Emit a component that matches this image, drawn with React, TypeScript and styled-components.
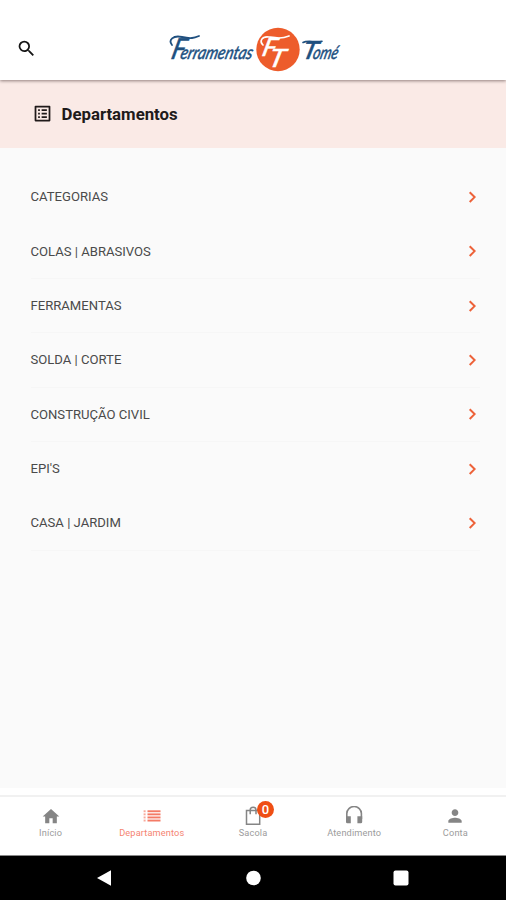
import React from "react";
import styled, { createGlobalStyle } from "styled-components";
import { MdSearch, MdOutlineListAlt, MdHome, MdPerson } from "react-icons/md";

const GlobalStyle = createGlobalStyle`
  * { box-sizing: border-box; }
  body { margin: 0; background: #fafafa; font-family: Roboto, sans-serif; }
`;

const Screen = styled.div`
  display: flex;
  flex-direction: column;
  width: 506px;
  height: 900px;
  overflow: hidden;
  background: #fafafa;
`;

const Header = styled.header`
  position: relative;
  z-index: 1;
  display: flex;
  align-items: flex-start;
  flex: 0 0 80px;
  padding: 22px 0 0 16px;
  background: #fff;
  box-shadow: 0 1px 3px rgba(60, 40, 40, 0.55);
`;

const SearchButton = styled.button`
  display: flex;
  margin: 16px 0 0;
  padding: 0;
  border: 0;
  background: none;
  color: #151515;
`;

const Logo = styled.svg`
  width: 190px;
  height: 56px;
  margin-left: 127px;
  overflow: visible;
`;

const LogoText = styled.text`
  font-family: Lato, sans-serif;
  font-style: italic;
  font-weight: 400;
`;

const TitleBar = styled.div`
  display: flex;
  align-items: center;
  flex: 0 0 68px;
  gap: 8.5px;
  padding: 0 0 1px 32px;
  background: #faeae6;
  color: #201a1a;
`;

const Title = styled.h1`
  margin: 0;
  font-size: 16.8px;
  font-weight: 700;
`;

const List = styled.ul`
  flex: 1;
  margin: 0;
  padding: 22.2px 26px 0 30.5px;
  list-style: none;
`;

const Row = styled.li<{ $line: boolean }>`
  display: flex;
  align-items: center;
  justify-content: space-between;
  height: 54.35px;
  padding-right: 2px;
  border-bottom: 1px solid ${(p) => (p.$line ? "#f6f6f6" : "transparent")};
  color: #4a4a4a;
  font-size: 13.1px;
`;

const RowLabel = styled.span`
  white-space: nowrap;
`;

const Chevron = styled.svg`
  width: 10px;
  height: 14px;
`;

const TabBar = styled.nav`
  display: grid;
  grid-template-columns: repeat(5, 1fr);
  flex: 0 0 68px;
  padding-top: 16px;
  background: #fff;
  border-top: 7px solid #fff;
  border-bottom: 1px solid #888;
  background-image: linear-gradient(#f1f1f1, #f1f1f1);
  background-size: 100% 2px;
  background-repeat: no-repeat;
`;

const Tab = styled.div<{ $active?: boolean }>`
  display: flex;
  flex-direction: column;
  align-items: center;
  margin-top: -6px;
  color: ${(p) => (p.$active ? "#f47b66" : "#858585")};
`;

const TabIcon = styled.span`
  position: relative;
  display: flex;
  align-items: center;
  justify-content: center;
  width: 20px;
  height: 22px;
`;

const TabLabel = styled.span<{ $active?: boolean }>`
  font-size: 9.2px;
  line-height: 11px;
  letter-spacing: 0.15px;
  color: ${(p) => (p.$active ? "#f58472" : "#9c9c9c")};
`;

const Badge = styled.span`
  position: absolute;
  left: 14px;
  top: -4px;
  width: 17px;
  height: 17px;
  border-radius: 50%;
  background: #ef4e14;
  color: #fff;
  font-size: 13px;
  font-weight: 500;
  line-height: 17px;
  text-align: center;
`;

const SystemBar = styled.div`
  display: flex;
  align-items: center;
  justify-content: space-between;
  flex: 0 0 44px;
  padding: 0 97px 0 96px;
  background: #000;
`;

const SystemIcon = styled.svg`
  width: 16px;
  height: 16px;
  fill: #fff;
`;

const departments = [
  { name: "CATEGORIAS", line: false },
  { name: "COLAS | ABRASIVOS", line: true },
  { name: "FERRAMENTAS", line: true },
  { name: "SOLDA | CORTE", line: true },
  { name: "CONSTRUÇÃO CIVIL", line: true },
  { name: "EPI'S", line: false },
  { name: "CASA | JARDIM", line: true },
];

const ListIcon = () => (
  <svg width="18" height="12" viewBox="0 0 18 12" fill="currentColor">
    {[0.3, 3.4, 6.5, 9.6].map((y) => (
      <g key={y}>
        <rect x="0.6" y={y} width="2" height="1.9" opacity=".65" />
        <rect x="4.5" y={y} width="13" height="1.9" />
      </g>
    ))}
  </svg>
);

const BagIcon = () => (
  <svg width="18" height="20" viewBox="0 0 18 20" fill="none" stroke="currentColor" strokeWidth="1.5">
    <path d="M2.5 4.5h13.2v13.8H2.5z" />
    <path d="M6.2 8.2V4.2a2.9 2.9 0 0 1 5.8 0v4" />
  </svg>
);

const HeadsetIcon = () => (
  <svg width="18" height="20" viewBox="0 0 18 20" fill="none" stroke="currentColor">
    <path d="M1.8 13V7.6a7.2 7 0 0 1 14.6 0V13" strokeWidth="1.6" />
    <path d="M1 10.3h4.8v7H2.4A1.4 1.4 0 0 1 1 15.9zM17.2 10.3h-4.8v7h3.4a1.4 1.4 0 0 0 1.4-1.4z" fill="currentColor" stroke="none" />
  </svg>
);

const tabs = [
  { label: "Início", icon: <MdHome size={21} /> },
  { label: "Departamentos", icon: <ListIcon />, active: true },
  { label: "Sacola", icon: <BagIcon />, badge: "0" },
  { label: "Atendimento", icon: <HeadsetIcon /> },
  { label: "Conta", icon: <MdPerson size={22} /> },
];

export default function App() {
  return (
    <Screen>
      <GlobalStyle />
      <Header>
        <SearchButton aria-label="Buscar">
          <MdSearch size={21} />
        </SearchButton>
        <Logo viewBox="0 0 190 56">
          <g fill="#20507f" stroke="#20507f">
            <g transform="translate(6 37) skewX(-14)" strokeWidth="0.5">
              <LogoText x="0" y="0" fontSize="29" textLength="14" lengthAdjust="spacingAndGlyphs">F</LogoText>
              <LogoText x="9.5" y="0" fontSize="18.5" textLength="72" lengthAdjust="spacingAndGlyphs">erramentas</LogoText>
            </g>
            <path d="M8 23C4 18 9 13 18 15s12 1 17-1" fill="none" strokeWidth="1.8" strokeLinecap="round" />
            <g transform="translate(140 37) skewX(-14)" strokeWidth="0.5">
              <LogoText x="-3" y="0" fontSize="24" textLength="15" lengthAdjust="spacingAndGlyphs">T</LogoText>
              <LogoText x="8" y="0" fontSize="18.5" textLength="25" lengthAdjust="spacingAndGlyphs">omé</LogoText>
            </g>
            <path d="M139 20.5c4-2.5 11 0 19-1.2" fill="none" strokeWidth="1.6" strokeLinecap="round" />
          </g>
          <circle cx="114" cy="27.5" r="21.7" fill="#ed5c2b" />
          <g fill="#fff" stroke="#fff" strokeWidth="0.5" transform="translate(98 34) skewX(-14)">
            <LogoText x="-1" y="0" fontSize="25" textLength="14" lengthAdjust="spacingAndGlyphs">F</LogoText>
            <LogoText x="8" y="10.5" fontSize="25" textLength="16" lengthAdjust="spacingAndGlyphs">T</LogoText>
          </g>
          <path d="M99 23c-4-4-1-9 6-8s12 2 20-1" fill="none" stroke="#fff" strokeWidth="1.7" strokeLinecap="round" />
        </Logo>
      </Header>
      <TitleBar>
        <MdOutlineListAlt size={21} />
        <Title>Departamentos</Title>
      </TitleBar>
      <List>
        {departments.map((d) => (
          <Row key={d.name} $line={d.line}>
            <RowLabel>{d.name}</RowLabel>
            <Chevron viewBox="0 0 10 14" fill="none" stroke="#ed6239" strokeWidth="2">
              <path d="M1.7 2.2 6.6 7.1 1.7 12" />
            </Chevron>
          </Row>
        ))}
      </List>
      <TabBar>
        {tabs.map((t) => (
          <Tab key={t.label} $active={t.active}>
            <TabIcon>
              {t.icon}
              {t.badge && <Badge>{t.badge}</Badge>}
            </TabIcon>
            <TabLabel $active={t.active}>{t.label}</TabLabel>
          </Tab>
        ))}
      </TabBar>
      <SystemBar>
        <SystemIcon viewBox="0 0 16 16"><path d="M1 8 15 .3v15.4z" /></SystemIcon>
        <SystemIcon viewBox="0 0 16 16"><circle cx="8.5" cy="8" r="7.3" /></SystemIcon>
        <SystemIcon viewBox="0 0 16 16"><rect x=".5" y=".5" width="15" height="15" rx="2" /></SystemIcon>
      </SystemBar>
    </Screen>
  );
}
